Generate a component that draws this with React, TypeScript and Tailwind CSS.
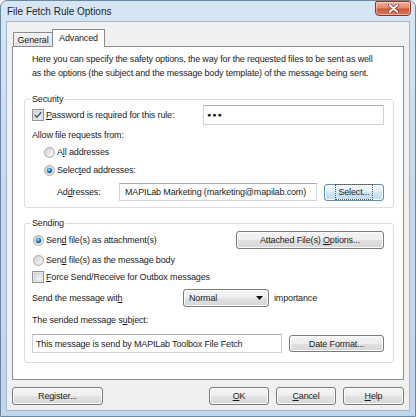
import type { ReactNode } from "react";

const btnGray =
  "border border-[#7a7a7a] rounded-[3px] bg-[linear-gradient(#f4f4f4_0%,#eeeeee_50%,#e2e2e2_50%,#d6d6d6_100%)] shadow-[inset_0_0_0_1px_#fbfbfb]";
const btnBlue =
  "border border-[#5a8fb8] rounded-[3px] bg-[linear-gradient(#eef6fb_0%,#e2eff8_50%,#cfe6f5_50%,#c0dcef_100%)] shadow-[inset_0_0_0_1px_#f6fbff]";
const field = "bg-white border border-[#cdd1d8] border-t-[#abadb3]";

function Button({ children, className = "", focused = false }: { children: ReactNode; className?: string; focused?: boolean }) {
  return (
    <div className={`${focused ? btnBlue : btnGray} flex items-center justify-center ${className}`}>
      {focused ? <span className="px-[2px] outline outline-1 outline-dotted outline-[#555]">{children}</span> : children}
    </div>
  );
}

function CheckBox({ checked = false }: { checked?: boolean }) {
  const id = checked ? "cbOn" : "cbOff";
  return (
    <svg width="12" height="12" viewBox="0 0 12 12" className="shrink-0">
      <defs>
        <linearGradient id={id} x1="0" y1="0" x2="1" y2="1">
          <stop offset="0" stopColor="#d6d6d6" />
          <stop offset="1" stopColor="#f9f9f9" />
        </linearGradient>
      </defs>
      <rect x="0.5" y="0.5" width="11" height="11" fill="#f6f6f6" stroke="#939393" />
      <rect x="2" y="2" width="8" height="8" fill={`url(#${id})`} stroke="#bdbdbd" strokeWidth="0.6" />
      {checked && <path d="M3 6.1 L5 8.3 L9.2 3.2" fill="none" stroke="#3a5585" strokeWidth="1.4" />}
    </svg>
  );
}

function Radio({ checked = false }: { checked?: boolean }) {
  const id = checked ? "rdOn" : "rdOff";
  return (
    <svg width="11" height="11" viewBox="0 0 12 12" className="shrink-0">
      <defs>
        <linearGradient id={id + "bg"} x1="0" y1="0" x2="1" y2="1">
          <stop offset="0" stopColor="#d2d2d2" />
          <stop offset="1" stopColor="#f8f8f8" />
        </linearGradient>
        <radialGradient id={id + "dot"} cx="0.4" cy="0.35" r="0.7">
          <stop offset="0" stopColor="#a9e2ff" />
          <stop offset="0.5" stopColor="#2a8ad4" />
          <stop offset="1" stopColor="#11457a" />
        </radialGradient>
      </defs>
      <circle cx="6" cy="6" r="5.4" fill={`url(#${id}bg)`} stroke="#959595" strokeWidth="0.9" />
      {checked && <circle cx="6" cy="6" r="2.9" fill={`url(#${id}dot)`} />}
    </svg>
  );
}

export default function App() {
  return (
    <div className="w-[416px] h-[417px] flex flex-col border border-[#6a88a6] rounded-t-[7px] bg-[linear-gradient(180deg,#d6e6f5_0%,#c7dbef_40%,#c0d6eb_100%)] text-[9px] tracking-[-0.15px] text-[#1c1c1c] font-['Liberation_Sans',Arial,sans-serif] leading-[14px] overflow-hidden">
      {/* title bar */}
      <div className="h-[20px] flex pl-[6px] pr-[4px] shrink-0">
        <div className="text-[10px] tracking-normal text-[#1e1e1e] self-center pt-[1px]">File Fetch Rule Options</div>
        <div className="ml-auto w-[36px] h-[15px] rounded-b-[4px] rounded-t-[2px] border border-[#8a3525] bg-[linear-gradient(#eeb3a2_0%,#e08871_45%,#cf5638_55%,#da7a5c_100%)] shadow-[inset_0_0_0_1px_rgba(255,225,215,0.55)] flex items-center justify-center">
          <svg width="11" height="9" viewBox="0 0 11 9">
            <path d="M1.5 1 L9.5 8 M9.5 1 L1.5 8" stroke="#7a2d1f" strokeWidth="3" strokeLinecap="round" />
            <path d="M1.5 1 L9.5 8 M9.5 1 L1.5 8" stroke="#ffffff" strokeWidth="1.7" strokeLinecap="round" />
          </svg>
        </div>
      </div>

      {/* client area */}
      <div className="flex-1 mx-[5px] mb-[5px] border border-[#a5b7cb] bg-[#f0f0f0] pt-[7px] px-[5px] flex flex-col">
        {/* tabs */}
        <div className="h-[17px] flex items-end pl-[1px]">
          <div className="w-[40px] h-[14px] border border-b-0 border-[#898c95] bg-[linear-gradient(#f3f3f3,#e2e2e2)] flex items-center justify-center">
            General
          </div>
          <div className="relative z-10 -ml-[1px] -mb-[1px] w-[53px] h-[18px] border border-b-0 border-[#898c95] bg-white flex items-start justify-center pt-[1px]">
            Advanced
          </div>
        </div>

        {/* tab panel */}
        <div className="h-[334px] border border-[#898c95] bg-white pt-[5px] pl-[11px] pr-[9px]">
          <p className="pl-[8px]">
            Here you can specify the safety options, the way for the requested files to be sent as well
            <br />
            as the options (the subject and the message body template) of the message being sent.
          </p>

          {/* Security */}
          <fieldset className="mt-[13px] border border-[#d5dfe5] rounded-[3px] pl-[7px] pr-[9px] pb-[6px]">
            <legend className="leading-[12px] px-[1px] -ml-[1px]">Security</legend>
            <div className="h-[20px] flex items-center">
              <CheckBox checked />
              <span className="ml-[2px]">
                <u>P</u>assword is required for this rule:
              </span>
              <div className={`${field} ml-auto w-[181px] h-[20px] flex items-center pl-[3px] text-[7px] tracking-[1px]`}>●●●</div>
            </div>
            <div className="mt-[3px] h-[14px] flex items-center">Allow file requests from:</div>
            <div className="mt-[3px] h-[14px] flex items-center pl-[12px]">
              <Radio />
              <span className="ml-[2px]">
                A<u>l</u>l addresses
              </span>
            </div>
            <div className="mt-[4px] h-[14px] flex items-center pl-[12px]">
              <Radio checked />
              <span className="ml-[2px]">
                Selec<u>t</u>ed addresses:
              </span>
            </div>
            <div className="mt-[6px] h-[18px] flex items-center pl-[25px]">
              <span className="w-[62px]">
                Ad<u>d</u>resses:
              </span>
              <div className={`${field} w-[198px] h-[18px] flex items-center pl-[5px]`}>MAPILab Marketing (marketing@mapilab.com)</div>
              <Button focused className="ml-auto w-[60px] h-[17px]">
                Select...
              </Button>
            </div>
          </fieldset>

          {/* Sending */}
          <fieldset className="mt-[9px] border border-[#d5dfe5] rounded-[3px] pl-[7px] pr-[9px] pb-[9px]">
            <legend className="leading-[12px] px-[1px] -ml-[1px]">Sending</legend>
            <div className="mt-[2px] h-[18px] flex items-center pl-[1px]">
              <Radio checked />
              <span className="ml-[2px]">
                Sen<u>d</u> file(s) as attachment(s)
              </span>
              <Button className="ml-auto w-[148px] h-[18px]">
                Attached File(s)&nbsp;<u>O</u>ptions...
              </Button>
            </div>
            <div className="mt-[4px] h-[14px] flex items-center pl-[1px]">
              <Radio />
              <span className="ml-[2px]">
                Sen<u>d</u> file(s) as the message body
              </span>
            </div>
            <div className="mt-[3px] h-[14px] flex items-center">
              <CheckBox />
              <span className="ml-[2px]">
                <u>F</u>orce Send/Receive for Outbox messages
              </span>
            </div>
            <div className="mt-[5px] h-[18px] flex items-center">
              <span className="w-[151px]">
                Send the message wit<u>h</u>
              </span>
              <div className={`${btnGray} w-[86px] h-[18px] flex items-center pl-[5px] pr-[5px]`}>
                <span>Normal</span>
                <svg width="7" height="4" viewBox="0 0 7 4" className="ml-auto">
                  <path d="M0 0 H7 L3.5 4 Z" fill="#111" />
                </svg>
              </div>
              <span className="ml-[5px]">importance</span>
            </div>
            <div className="mt-[6px] h-[14px] flex items-center">
              The sended message s<u>u</u>bject:
            </div>
            <div className="mt-[7px] h-[19px] flex items-center">
              <div className={`${field} w-[250px] h-[19px] flex items-center pl-[3px]`}>This message is send by MAPILab Toolbox File Fetch</div>
              <Button className="ml-auto w-[95px] h-[17px]">Date Format...</Button>
            </div>
          </fieldset>
        </div>

        {/* dialog buttons */}
        <div className="mt-[7px] flex">
          <Button className="w-[91px] h-[18px]">Register...</Button>
          <div className="ml-auto flex gap-[7px]">
            <Button className="w-[60px] h-[18px]">
              <u>O</u>K
            </Button>
            <Button className="w-[60px] h-[18px]">
              <u>C</u>ancel
            </Button>
            <Button className="w-[61px] h-[18px]">
              <u>H</u>elp
            </Button>
          </div>
        </div>
      </div>
    </div>
  );
}
